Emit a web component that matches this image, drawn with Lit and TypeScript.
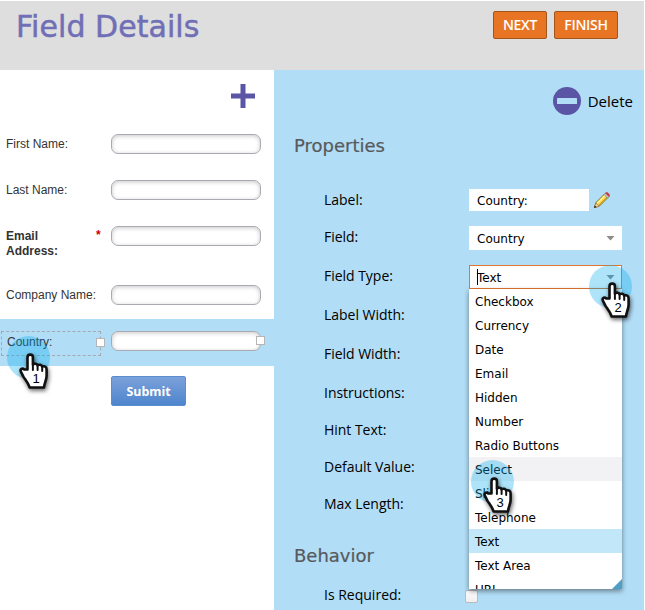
import { LitElement, html, css, svg } from "lit";
import { customElement, property } from "lit/decorators.js";
import { classMap } from "lit/directives/class-map.js";

@customElement("click-marker")
class ClickMarker extends LitElement {
  @property() step = "";

  static styles = css`
    :host { display: block; width: 60px; height: 64px; pointer-events: none; }
    svg { display: block; overflow: visible; }
    .halo { fill: rgba(0, 170, 240, 0.32); }
    .hand { fill: #fff; stroke: #111; stroke-width: 2.6; stroke-linejoin: round; filter: drop-shadow(1px 2px 2px rgba(0, 0, 0, 0.6)); }
    .knuckle { fill: none; stroke: #111; stroke-width: 2; stroke-linecap: round; }
    .step { font: 13px "Liberation Sans", Arial, sans-serif; fill: #000; text-anchor: middle; }
  `;

  render() {
    return html`<svg width="60" height="64" viewBox="0 0 60 64">
      ${svg`
        <circle class="halo" cx="21.5" cy="21.5" r="21.5"></circle>
        <path class="hand" d="M20.5 33.5V21.3c0-3.6 5.4-3.6 5.4 0v7.2c1.4-1.4 4.2-.9 4.7.8 1.4-1.1 4-.6 4.6 1.2 2.7-.8 4.4.4 4.4 3v6.2c0 4.2-2.2 7-2.6 11.8H22.7c-1.6-4.6-4-7.3-6.2-10.6l-2.4-4.8c-1.5-2.7.9-4.7 3.2-2.6z"></path>
        <path class="knuckle" d="M25.9 28v6M30.6 29.5v4.5M35.2 31v4"></path>
        <text class="step" x="29" y="46.5">${this.step}</text>`}
    </svg>`;
  }
}

@customElement("app-root")
class AppRoot extends LitElement {
  static styles = css`
    :host { display: block; width: 645px; height: 610px; overflow: hidden; background: #fff; position: relative; font-family: "Open Sans", sans-serif; color: #000; }
    * { box-sizing: border-box; }
    .page { width: 644px; height: 610px; padding-top: 1px; }
    header { height: 69px; background: #dedede; display: flex; justify-content: space-between; align-items: flex-start; padding: 0 26px 0 16px; }
    h1 { margin: 6px 0 0; font: 30px/40px "DejaVu Sans", sans-serif; letter-spacing: 0.05px; color: #706fb5; -webkit-text-stroke: 0.5px #706fb5; white-space: nowrap; }
    .actions { display: flex; gap: 7px; padding-top: 10px; }
    .action { height: 28px; border: 1px solid #a5551c; border-radius: 2px; background: #e87524; color: #fff; font: 600 14px/26px "Open Sans", sans-serif; text-align: center; letter-spacing: -0.3px; }
    .next { width: 54px; }
    .finish { width: 64px; }
    .body { display: flex; height: 540px; }
    .form { width: 274px; background: #fff; }
    .tools { height: 51px; padding: 14px 19px 0 0; display: flex; justify-content: flex-end; }
    .row { display: flex; align-items: flex-start; height: 46px; padding: 13px 0 0 6px; font: 12px/15px "Liberation Sans", Arial, sans-serif; color: #333; }
    .row.tall { height: 59px; }
    .row.selected { height: 47px; padding: 12px 0 0 1px; margin-top: 1px; background: #b1ddf6; }
    .name { width: 92px; padding-top: 3px; white-space: nowrap; }
    .name.required { font-weight: bold; white-space: normal; width: 70px; }
    .star { width: 22px; padding-left: 20px; margin-top: 2px; color: #c00; font-weight: bold; }
    .box { width: 150px; height: 20px; margin-left: 13px; border: 1px solid #a9a9b1; border-radius: 7px; background: #fff; box-shadow: inset 0 1px 4px rgba(0, 0, 0, 0.22); position: relative; }
    .row.selected .name { position: relative; width: 100px; height: 25px; border: 1px dashed #a3a9ae; padding: 3px 0 0 5px; }
    .row.selected .box { margin-left: 10px; }
    .handle { position: absolute; width: 9px; height: 9px; background: #fff; border: 1px solid #b5b5b5; }
    .name .handle { right: -5px; top: 6px; }
    .box .handle { right: -5px; top: 4px; }
    .submit { margin: 10px 0 0 111px; width: 75px; height: 30px; border: 1px solid #5b8bd0; border-radius: 2px; background: linear-gradient(#7ba1da, #4f85cd); color: #fff; font: bold 12.4px/29px "Open Sans", sans-serif; text-align: center; }
    .panel { width: 370px; background: #b1ddf6; padding: 0 11px 0 20px; }
    .delete { height: 62px; display: flex; justify-content: flex-end; align-items: center; gap: 7px; font-size: 15px; }
    h2 { margin: 2px 0 0; font: 18px/24px "DejaVu Sans", sans-serif; letter-spacing: 0; color: #58595b; -webkit-text-stroke: 0.2px #58595b; }
    .props { margin-top: 23px; padding-left: 30px; display: grid; grid-template-columns: 145px 1fr; grid-template-rows: 38px 38px 40px 38px 40px 38px 36px 37px 37px; align-items: center; font-size: 14px; line-height: 18px; }
    .caption { padding-bottom: 2px; letter-spacing: -0.03px; }
    .caption:first-child { padding-bottom: 0; }
    .control { grid-column: 2; font: 12px/22px "DejaVu Sans", sans-serif; display: flex; align-items: center; }
    .input { width: 120px; height: 22px; background: #fff; padding: 1px 0 0 8px; }
    .pencil { margin-left: 4px; }
    .combo { width: 153px; height: 24px; background: #fff; padding: 0 7px 0 8px; display: flex; justify-content: space-between; align-items: center; position: relative; }
    .combo.open { border: 1px solid #e3762e; padding: 0 6px 0 7px; }
    .value { padding-top: 1px; }
    .open .value { border-left: 1px solid #000; padding-top: 0; height: 16px; line-height: 18px; text-indent: -1px; }
    .arrow { width: 9px; height: 5px; background: #8c8c8c; clip-path: polygon(0 0, 100% 0, 50% 100%); }
    .list { position: absolute; left: -1px; top: 23px; width: 153px; height: 300px; background: #fff; overflow: hidden; box-shadow: 0 2px 5px rgba(0, 0, 0, 0.45); z-index: 2; text-indent: 0; }
    .option { height: 24px; line-height: 26px; padding-left: 6px; }
    .option.hover { background: #f2f2f5; }
    .option.current { background: #c2e7f9; }
    .corner { position: absolute; right: 0; bottom: 0; width: 10px; height: 10px; background: #4e9fc5; clip-path: polygon(100% 0, 100% 100%, 0 100%); }
    .behavior { margin-top: 21px; }
    .required-row { margin: 17px 0 0 30px; display: flex; font-size: 14px; line-height: 20px; }
    .required-row .text { width: 141px; }
    .check { width: 13px; height: 13px; margin-top: 5px; border: 1px solid #bbb; border-radius: 2px; background: linear-gradient(#fff, #eee); }
    .marker { position: absolute; z-index: 5; }
    .m1 { left: 7px; top: 336px; }
    .m2 { left: 589px; top: 265px; }
    .m3 { left: 471px; top: 460px; }
  `;

  options = ["Checkbox", "Currency", "Date", "Email", "Hidden", "Number", "Radio Buttons", "Select", "Slider", "Telephone", "Text", "Text Area", "URL"];

  control(label: string) {
    if (label === "Label:")
      return html`<div class="control"><div class="input">Country:</div>
        <svg class="pencil" width="18" height="18" viewBox="0 0 18 18">
          <path d="M1.5 16.5L3 11.5 11.5 3l3.5 3.5-8.5 8.5z" fill="#f6d94a" stroke="#8c7414" stroke-width="1"></path>
          <path d="M4.5 12L12 4.5" stroke="#fff6a8" stroke-width="1.3"></path>
          <path d="M6 14l8-8" stroke="#c99b22" stroke-width="1"></path>
          <path d="M1.2 16.8l1.6-4.9 3.4 3.3z" fill="#f1d2a0" stroke="#86683c" stroke-width=".6"></path>
          <path d="M1 17l.9-2.4 1.6 1.5z" fill="#222"></path>
          <path d="M11 3.5l1.5-1.5 3.5 3.5L14.5 7z" fill="#c8cdd2" stroke="#777" stroke-width=".6"></path>
          <path d="M12.5 2c1.5-1.6 5 1.8 3.5 3.5z" fill="#e2393e" stroke="#a8323a" stroke-width=".7"></path>
        </svg></div>`;
    if (label === "Field:")
      return html`<div class="control"><div class="combo"><span class="value">Country</span><i class="arrow"></i></div></div>`;
    if (label === "Field Type:")
      return html`<div class="control"><div class="combo open"><span class="value">Text</span><i class="arrow"></i>
        <div class="list">${this.options.map((o) => html`<div class=${classMap({ option: true, hover: o === "Select", current: o === "Text" })}>${o}</div>`)}<i class="corner"></i></div>
      </div></div>`;
    return html`<span></span>`;
  }

  render() {
    const labels = ["Label:", "Field:", "Field Type:", "Label Width:", "Field Width:", "Instructions:", "Hint Text:", "Default Value:", "Max Length:"];
    return html`<div class="page">
      <header><h1>Field Details</h1><div class="actions"><div class="action next">NEXT</div><div class="action finish">FINISH</div></div></header>
      <div class="body">
        <div class="form">
          <div class="tools"><svg width="24" height="24" viewBox="0 0 24 24"><path d="M12 0v24M0 12h24" stroke="#5b55a5" stroke-width="5"></path></svg></div>
          <div class="row"><div class="name">First Name:</div><div class="box"></div></div>
          <div class="row"><div class="name">Last Name:</div><div class="box"></div></div>
          <div class="row tall"><div class="name required">Email Address:</div><div class="star">*</div><div class="box"></div></div>
          <div class="row"><div class="name">Company Name:</div><div class="box"></div></div>
          <div class="row selected"><div class="name">Country:<i class="handle"></i></div><div class="box"><i class="handle"></i></div></div>
          <div class="submit">Submit</div>
        </div>
        <div class="panel">
          <div class="delete"><svg width="28" height="28" viewBox="0 0 28 28"><circle cx="14" cy="14" r="14" fill="#5b55a5"></circle><rect x="4" y="11" width="20" height="6" rx=".5" fill="#b1ddf6"></rect></svg><span>Delete</span></div>
          <h2>Properties</h2>
          <div class="props">${labels.map((l) => html`<span class="caption">${l}</span>${this.control(l)}`)}</div>
          <h2 class="behavior">Behavior</h2>
          <div class="required-row"><span class="text">Is Required:</span><i class="check"></i></div>
        </div>
      </div>
      <click-marker class="marker m1" step="1"></click-marker>
      <click-marker class="marker m2" step="2"></click-marker>
      <click-marker class="marker m3" step="3"></click-marker>
    </div>`;
  }
}
